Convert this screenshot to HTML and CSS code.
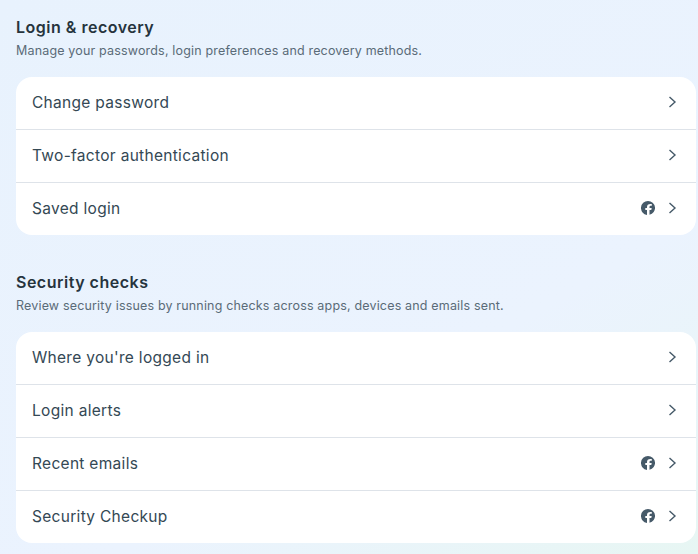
FILE: index.html
```html
<!DOCTYPE html>
<html lang="en">
<head>
<meta charset="utf-8">
<title>Password and security</title>
<link rel="stylesheet" href="styles.css">
</head>
<body>
<svg class="sprites" width="0" height="0" aria-hidden="true">
  <symbol id="chev" viewBox="0 0 12 12"><path d="M2.500 1 8 6l-5.500 5" fill="none" stroke="currentColor" stroke-width="1.400"/></symbol>
  <symbol id="fb" viewBox="0 0 14 14"><path fill-rule="evenodd" d="M7 0a7 7 0 0 1 1.500 13.840V9.100h1.800l.4-2.100H8.500V6.200c0-1 .5-1.400 1.400-1.400h.9V3a8 8 0 0 0-1.500-.1C7.200 2.900 6 4 6 6v1H4.300v2.100H6v4.830A7 7 0 0 1 7 0Z" fill="currentColor"/></symbol>
</svg>
<main class="page">
  <section class="group">
    <h2 class="title">Login &amp; recovery</h2>
    <p class="sub">Manage your passwords, login preferences and recovery methods.</p>
    <div class="card">
      <a class="row"><span class="label">Change password</span><svg class="chev"><use href="#chev"/></svg></a>
      <a class="row"><span class="label">Two-factor authentication</span><svg class="chev"><use href="#chev"/></svg></a>
      <a class="row"><span class="label">Saved login</span><svg class="fb"><use href="#fb"/></svg><svg class="chev"><use href="#chev"/></svg></a>
    </div>
  </section>
  <section class="group">
    <h2 class="title">Security checks</h2>
    <p class="sub">Review security issues by running checks across apps, devices and emails sent.</p>
    <div class="card">
      <a class="row"><span class="label">Where you're logged in</span><svg class="chev"><use href="#chev"/></svg></a>
      <a class="row"><span class="label">Login alerts</span><svg class="chev"><use href="#chev"/></svg></a>
      <a class="row"><span class="label">Recent emails</span><svg class="fb"><use href="#fb"/></svg><svg class="chev"><use href="#chev"/></svg></a>
      <a class="row"><span class="label">Security Checkup</span><svg class="fb"><use href="#fb"/></svg><svg class="chev"><use href="#chev"/></svg></a>
    </div>
  </section>
</main>
</body>
</html>
```

FILE: styles.css
```css
* { box-sizing: border-box; }
html, body { margin: 0; height: 100%; overflow: hidden; }
body {
  font-family: Inter, "Noto Sans", sans-serif;
  background: linear-gradient(150deg, #e8f2fd 0%, #ebf3fe 65%, #e7f6f3 100%);
  color: #1c2b33;
}
.sprites { position: absolute; }
.page { padding: 17px 2px 0 16px; display: flex; flex-direction: column; gap: 37px; }
.title { margin: 0; font-size: 16px; line-height: 20px; font-weight: 600; color: #26343d; letter-spacing: .5px; }
.sub { margin: 5px 0 17px; font-size: 12.500px; line-height: 18px; color: #5a6b78; letter-spacing: .17px; }
.card { background: #fff; border-radius: 16px; overflow: hidden; }
.row { display: flex; align-items: center; height: 53px; padding: 0 17px 2px 16px; border-bottom: 1px solid #dee3e9; }
.row:last-child { height: 52px; border-bottom: 0; }
.label { flex: 1; font-size: 15.500px; color: #344854; letter-spacing: .3px; }
.fb { width: 14px; height: 14px; margin-right: 12px; color: #465a69; }
.chev { width: 12px; height: 12px; color: #465a69; }
```
